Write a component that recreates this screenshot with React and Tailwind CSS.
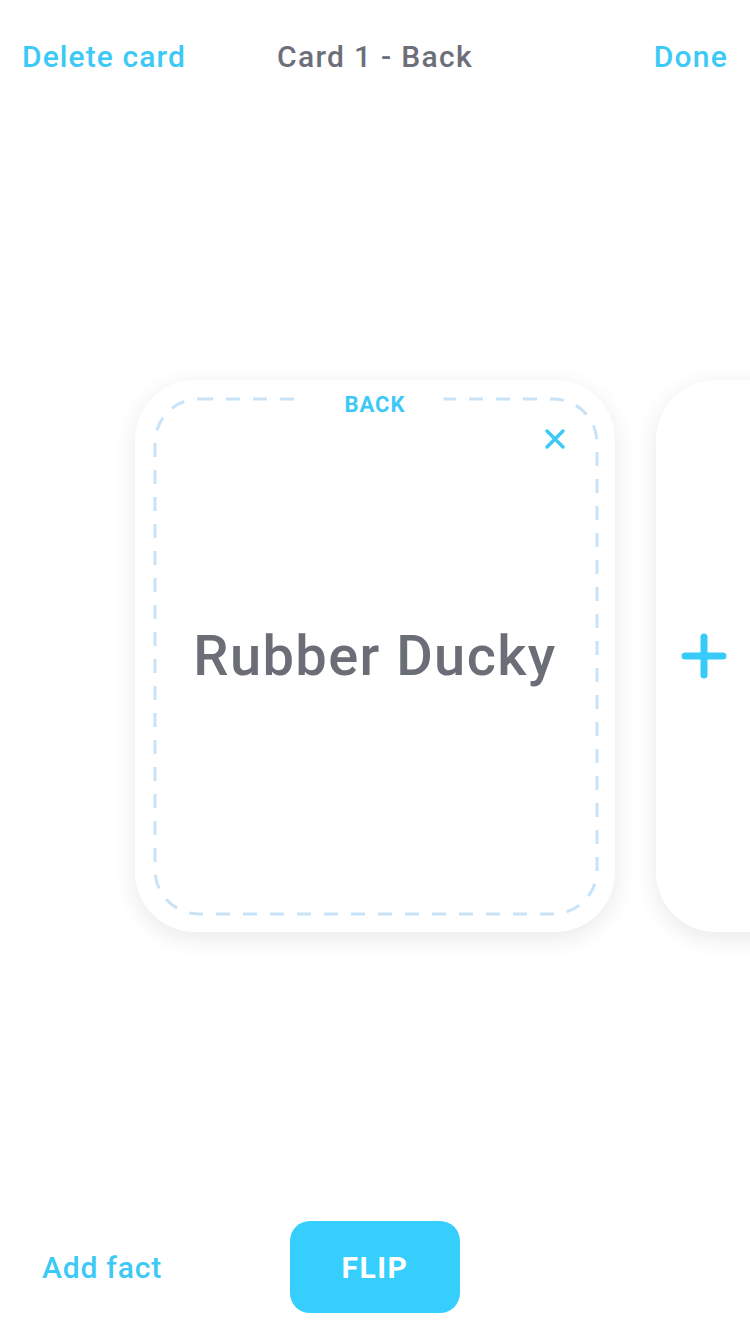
import React from 'react';

const font = { fontFamily: 'Roboto, "Liberation Sans", sans-serif' };

const App = () => {
  return (
    <div
      className="relative w-[750px] h-[1334px] overflow-hidden bg-white flex flex-col"
      style={font}
    >
      {/* Header */}
      <div className="h-[112px] grid grid-cols-[1fr_auto_1fr] items-center px-[22px]">
        <button className="justify-self-start text-[30px] font-medium text-[#3cc9f6] tracking-[1.1px]">
          Delete card
        </button>
        <div className="text-[30px] font-medium text-[#6d6f78] tracking-[1.3px]">Card 1 - Back</div>
        <button className="justify-self-end text-[30px] font-medium text-[#3cc9f6] tracking-[1.2px]">
          Done
        </button>
      </div>

      {/* Cards */}
      <div className="mt-[268px] flex gap-[41px] pl-[135px]">
        <div className="relative shrink-0 w-[480px] h-[552px] rounded-[60px] bg-white shadow-[0_6px_24px_rgba(0,0,0,0.09)] flex items-center justify-center">
          <svg className="absolute inset-0" width="480" height="552">
            <rect
              x="20"
              y="19"
              width="442"
              height="515"
              rx="44"
              fill="none"
              stroke="#c8e3f7"
              strokeWidth="3"
              strokeDasharray="14 13"
            />
          </svg>
          <div className="absolute top-[12px] left-1/2 -translate-x-1/2 bg-white px-[38px] text-[22px] font-bold text-[#3cc9f6] leading-[26px] tracking-[1px]">
            BACK
          </div>
          <button className="absolute top-[48px] left-[409px] w-[22px] h-[22px]">
            <svg width="22" height="22" viewBox="0 0 22 22">
              <path d="M3 3L19 19M19 3L3 19" stroke="#3cc9f6" strokeWidth="3.5" strokeLinecap="round" />
            </svg>
          </button>
          <div className="relative text-[56px] font-medium text-[#6b6d77] tracking-[1.4px] mt-[-1px]">
            Rubber Ducky
          </div>
        </div>

        <div className="relative shrink-0 w-[480px] h-[552px] rounded-[60px] bg-white shadow-[0_6px_24px_rgba(0,0,0,0.09)] flex items-center">
          <svg className="ml-[25px]" width="46" height="46" viewBox="0 0 46 46">
            <path d="M23 4V42M4 23H42" stroke="#36cbf9" strokeWidth="7" strokeLinecap="round" />
          </svg>
        </div>
      </div>

      {/* Bottom bar */}
      <div className="mt-auto mb-[21px] flex items-center pl-[42px]">
        <div className="w-[248px]">
          <button className="text-[30px] font-medium text-[#3cc9f6] tracking-[0.8px]">Add fact</button>
        </div>
        <button className="w-[170px] h-[92px] rounded-[20px] bg-[#36cffd] text-white text-[30px] font-bold tracking-[1.5px]">
          FLIP
        </button>
      </div>
    </div>
  );
};

export default App;
